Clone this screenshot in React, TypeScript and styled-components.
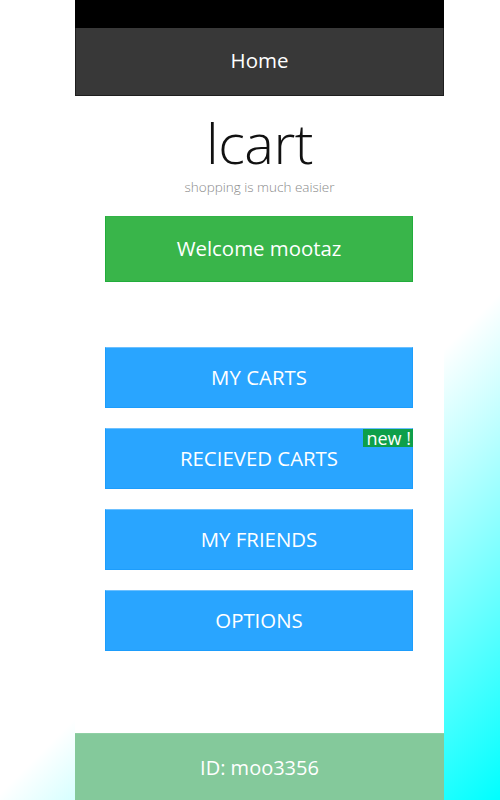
import React from "react";
import styled, { createGlobalStyle } from "styled-components";

const Global = createGlobalStyle`
  html, body {
    margin: 0;
    padding: 0;
  }
  body {
    width: 500px;
    min-height: 800px;
    background: linear-gradient(135deg, #ffffff 61%, #00ffff 100%);
    font-family: "Open Sans", "Noto Sans", sans-serif;
  }
`;

const Column = styled.div`
  width: 369px;
  height: 800px;
  margin-left: 75px;
  display: flex;
  flex-direction: column;
  background: #ffffff;
`;

const StatusBar = styled.div`
  height: 28px;
  flex: none;
  background: #000000;
`;

const Header = styled.header`
  box-sizing: border-box;
  flex: none;
  height: 68px;
  background: #383838;
  border: 1px solid #1e1e1e;
  border-top: none;
  display: flex;
  align-items: center;
  justify-content: center;
  color: #ffffff;
  font-size: 20.5px;
  padding-bottom: 3px;
`;

const Main = styled.main`
  flex: 1;
  display: flex;
  flex-direction: column;
  align-items: center;
`;

const Title = styled.h1`
  margin: 16px 0 0;
  font-size: 56px;
  font-weight: 300;
  line-height: 60px;
  color: #111111;
  letter-spacing: -0.5px;
`;

const Tagline = styled.div`
  font-size: 13.5px;
  font-weight: 300;
  color: #8a8a8a;
  line-height: 18px;
  margin-top: 6px;
`;

const Button = styled.div<{ $tone: "green" | "blue"; $tall?: boolean }>`
  position: relative;
  box-sizing: border-box;
  align-self: flex-start;
  margin-left: 30px;
  width: 308px;
  height: ${(p) => (p.$tall ? "66px" : "61px")};
  padding-bottom: 2px;
  display: flex;
  align-items: center;
  justify-content: center;
  color: #ffffff;
  font-size: 20.4px;
  background: ${(p) => (p.$tone === "green" ? "#39b54a" : "#29a5ff")};
  border: 1px solid ${(p) => (p.$tone === "green" ? "#22ad3c" : "#1d9dfc")};
  border-top-color: ${(p) => (p.$tone === "green" ? "#33b347" : "#6cc0ff")};
`;

const Welcome = styled(Button)`
  margin-top: 20px;
  margin-bottom: 65px;
`;

const Menu = styled.div`
  align-self: stretch;
  display: flex;
  flex-direction: column;
  gap: 20px;
`;

const Badge = styled.span`
  position: absolute;
  top: 0;
  right: -1px;
  background: #0e9f4a;
  color: #ffffff;
  font-size: 18px;
  line-height: 18px;
  padding: 0 2px 0 3px;
`;

const Footer = styled.footer`
  box-sizing: border-box;
  flex: none;
  height: 67px;
  background: #84c99b;
  border-top: 1px solid #8fd0a5;
  display: flex;
  align-items: center;
  justify-content: center;
  color: #ffffff;
  font-size: 20px;
`;

export default function App() {
  return (
    <>
      <Global />
      <Column>
        <StatusBar />
        <Header>Home</Header>
        <Main>
          <Title>lcart</Title>
          <Tagline>shopping is much eaisier</Tagline>
          <Welcome $tone="green" $tall>
            Welcome mootaz
          </Welcome>
          <Menu>
            <Button $tone="blue">MY CARTS</Button>
            <Button $tone="blue">
              RECIEVED CARTS
              <Badge>new !</Badge>
            </Button>
            <Button $tone="blue">MY FRIENDS</Button>
            <Button $tone="blue">OPTIONS</Button>
          </Menu>
        </Main>
        <Footer>ID: moo3356</Footer>
      </Column>
    </>
  );
}
